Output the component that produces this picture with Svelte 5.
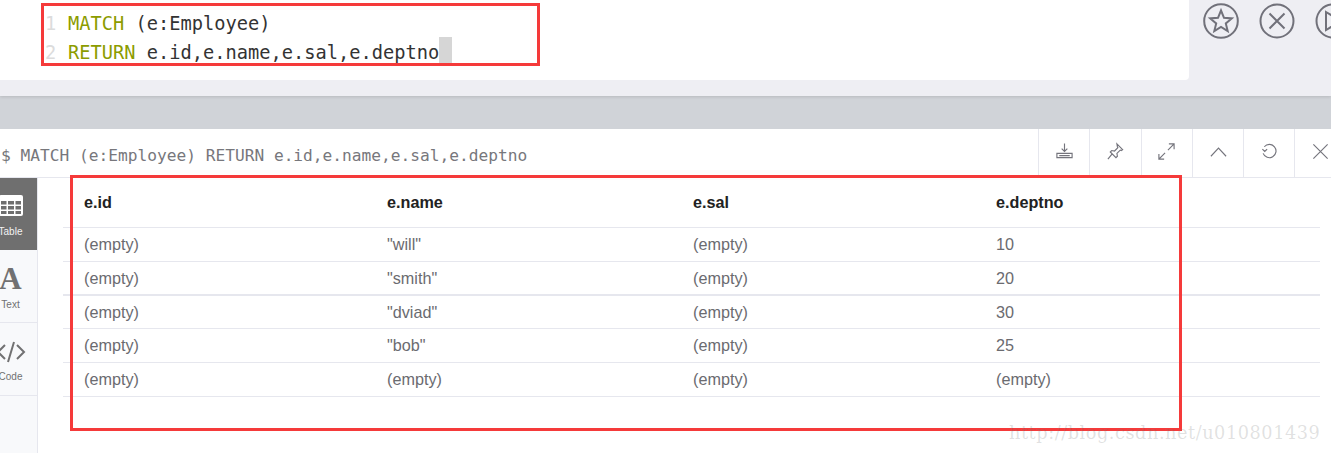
<script>
  const columns = ['e.id', 'e.name', 'e.sal', 'e.deptno'];
  const rows = [
    ['(empty)', '"will"', '(empty)', '10'],
    ['(empty)', '"smith"', '(empty)', '20'],
    ['(empty)', '"dviad"', '(empty)', '30'],
    ['(empty)', '"bob"', '(empty)', '25'],
    ['(empty)', '(empty)', '(empty)', '(empty)']
  ];
  const tools = ['download', 'pin', 'expand', 'up', 'refresh', 'close'];
</script>

<div class="page">
  <section class="top">
    <div class="editor">
      <div class="line"><span class="num">1</span><span class="kw">MATCH</span> (e:Employee)</div>
      <div class="line"><span class="num">2</span><span class="kw">RETURN</span> e.id,e.name,e.sal,e.deptno<span class="cursor"></span></div>
    </div>
    <div class="actions">
      <svg viewBox="0 0 36 36" class="action">
        <circle cx="18" cy="18" r="16.800" />
        <path d="M18 7.500l3 7.300 7.800.6-6 5 1.900 7.600-6.700-4.100-6.700 4.100 1.900-7.600-6-5 7.800-.6z" />
      </svg>
      <svg viewBox="0 0 36 36" class="action">
        <circle cx="18" cy="18" r="16.500" />
        <path d="M10.500 10.500l15 15M25.500 10.500l-15 15" />
      </svg>
      <svg viewBox="0 0 36 36" class="action">
        <circle cx="18" cy="18" r="16.500" />
        <path d="M11 9l15 9-15 9z" />
      </svg>
    </div>
  </section>

  <div class="gap"></div>

  <section class="frame">
    <header class="head">
      <div class="query">$ MATCH (e:Employee) RETURN e.id,e.name,e.sal,e.deptno</div>
      {#each tools as tool}
        <div class="tool">
          <svg viewBox="0 0 20 20">
            {#if tool === 'download'}
              <path d="M10 1.500v8.500M7 7l3 3 3-3M2 12h16v4.500H2zM4.500 14.300h11" />
            {:else if tool === 'pin'}
              <path d="M11.500 2l6 6-1.500 1-1-.5-3.500 3.500.5 3-1.500 1.500-6-6L6 9l3 .5L12.500 6 12 5z M6.500 12.500L2 18" />
            {:else if tool === 'expand'}
              <path d="M11.500 8.500L18 2M12.500 2H18v5.500M8.500 11.500L2 18M2 12.500V18h5.500" />
            {:else if tool === 'up'}
              <path d="M2 15l8-8.500 8 8.500" />
            {:else if tool === 'refresh'}
              <path d="M4.500 5a7 7 0 1 1-1.200 7M2.500 7.500l2.500 2.500 2.500-2.500" />
            {:else}
              <path d="M2.500 2.500l15 15M17.500 2.500l-15 15" />
            {/if}
          </svg>
        </div>
      {/each}
    </header>

    <div class="body">
      <nav class="side">
        <div class="tab active">
          <div class="tab-in">
            <svg viewBox="0 0 24 21" class="tab-icon grid-icon">
              <rect x="0" y="0" width="24" height="21" rx="2" />
              <path d="M2 6h5.500v3.500H2zM9 6h6v3.500H9zM16.500 6H22v3.500h-5.500zM2 11h5.500v3.500H2zM9 11h6v3.500H9zM16.500 11H22v3.500h-5.500zM2 16h5.500v3H2zM9 16h6v3H9zM16.500 16H22v3h-5.500z" />
            </svg>
            <span>Table</span>
          </div>
        </div>
        <div class="tab">
          <div class="tab-in">
            <span class="big-a">A</span>
            <span>Text</span>
          </div>
        </div>
        <div class="tab">
          <div class="tab-in">
            <svg viewBox="0 0 30 22" class="tab-icon code-icon">
              <path d="M9 4L2 11l7 7M21 4l7 7-7 7M18 1l-6 20" />
            </svg>
            <span>Code</span>
          </div>
        </div>
      </nav>

      <div class="results">
        <div class="row th">
          {#each columns as c}<div>{c}</div>{/each}
        </div>
        {#each rows as row}
          <div class="row">
            {#each row as cell}<div>{cell}</div>{/each}
          </div>
        {/each}
      </div>
    </div>
  </section>

  <div class="mark mark-editor"></div>
  <div class="mark mark-table"></div>
  <div class="watermark">http://blog.csdn.net/u010801439</div>
</div>

<style>
  :global(body) {
    margin: 0;
    background: #fff;
  }

  .page {
    position: relative;
    width: 1331px;
    height: 453px;
    overflow: hidden;
    font-family: "Liberation Sans", Arial, sans-serif;
  }

  .top {
    display: flex;
    height: 96px;
    background: #eeeef3;
    box-shadow: 0 1px 3px rgba(0, 0, 0, 0.12);
    position: relative;
  }

  .editor {
    width: 1189px;
    height: 80px;
    box-sizing: border-box;
    padding-top: 9px;
    background: #fff;
    border-bottom-right-radius: 4px;
    font-family: "DejaVu Sans Mono", monospace;
    font-size: 18.700px;
    color: #333;
    flex-shrink: 0;
  }

  .line {
    display: flex;
    white-space: pre;
    height: 29px;
    line-height: 29px;
    padding-left: 45px;
  }

  .num {
    width: 23px;
    color: #dcdcdc;
  }

  .kw {
    color: #8c9c00;
  }

  .cursor {
    width: 13px;
    height: 26px;
    margin-top: -1px;
    background: #d6d6d6;
  }

  .actions {
    display: flex;
    gap: 20px;
    padding: 3px 0 0 14px;
  }

  .action {
    width: 36px;
    height: 36px;
    flex-shrink: 0;
    fill: none;
    stroke: #71717a;
    stroke-width: 2;
  }

  .gap {
    height: 33px;
    background: #d0d3d8;
  }

  .frame {
    background: #fff;
    height: 324px;
  }

  .head {
    display: flex;
    align-items: stretch;
    height: 48px;
    border-bottom: 1px solid #e6e7ee;
    color: #717172;
  }

  .query {
    width: 1038px;
    flex-shrink: 0;
    box-sizing: border-box;
    padding: 17px 0 0 1px;
    font-family: "DejaVu Sans Mono", monospace;
    font-size: 16.200px;
    white-space: pre;
    color: #77777c;
  }

  .tool {
    width: 51.300px;
    flex-shrink: 0;
    box-sizing: border-box;
    border-left: 1px solid #e6e7ee;
    display: flex;
    align-items: center;
    justify-content: center;
    padding-bottom: 3px;
  }

  .tool svg {
    width: 19px;
    height: 19px;
    fill: none;
    stroke: #74747c;
    stroke-width: 1.200;
  }

  .body {
    display: flex;
    height: 275px;
  }

  .side {
    width: 38px;
    flex-shrink: 0;
    box-sizing: border-box;
    overflow: hidden;
    background: #f8f9fb;
    border-right: 1px solid #e6e7ee;
  }

  .tab {
    height: 73px;
    box-sizing: border-box;
    padding-top: 15px;
    border-bottom: 1px solid #e6e7ee;
    font-size: 10px;
    color: #717172;
  }

  .tab.active {
    height: 72px;
    padding-top: 17px;
    background: #6f6f6f;
    border-bottom: 0;
    color: #f3f3f3;
  }

  .tab-in {
    width: 21px;
    display: flex;
    flex-direction: column;
    align-items: center;
  }

  .tab-icon {
    flex-shrink: 0;
  }

  .grid-icon {
    width: 24px;
    height: 21px;
    margin-bottom: 10px;
    fill: #fff;
  }

  .grid-icon path {
    fill: #6f6f6f;
  }

  .code-icon {
    width: 30px;
    height: 22px;
    fill: none;
    stroke: #717172;
    stroke-width: 2;
    margin-top: 3px;
    margin-bottom: 8px;
  }

  .big-a {
    font-family: "Liberation Serif", serif;
    font-weight: bold;
    font-size: 31px;
    line-height: 30px;
    margin-top: -1px;
    margin-bottom: 5px;
  }

  .results {
    margin-left: 25px;
    width: 1257px;
    flex-shrink: 0;
  }

  .row {
    display: grid;
    grid-template-columns: 303px 306px 303px 1fr;
    height: 33.800px;
    box-sizing: border-box;
    padding: 7px 0 0 21px;
    border-bottom: 1px solid #e6e7ee;
    font-size: 16.200px;
    line-height: 18px;
    color: #6b6b70;
  }

  .row.th {
    height: 50px;
    padding-top: 15px;
    font-weight: bold;
    color: #222;
  }

  .row:nth-child(3) {
    border-bottom-width: 2px;
  }

  .mark {
    position: absolute;
    box-sizing: border-box;
    border: 3px solid #f53a3a;
  }

  .mark-editor {
    left: 41px;
    top: 3px;
    width: 499px;
    height: 63px;
  }

  .mark-table {
    left: 70px;
    top: 175px;
    width: 1112px;
    height: 256px;
  }

  .watermark {
    position: absolute;
    left: 1009px;
    top: 423px;
    font-family: "DejaVu Serif", serif;
    font-size: 17.700px;
    letter-spacing: 0.550px;
    color: rgba(120, 120, 120, 0.22);
    white-space: nowrap;
  }
</style>
